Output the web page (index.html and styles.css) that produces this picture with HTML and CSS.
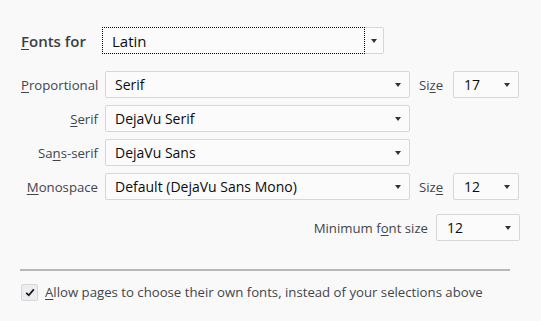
FILE: index.html
```html
<!DOCTYPE html>
<html>
<head>
<meta charset="utf-8">
<link rel="stylesheet" href="styles.css">
</head>
<body>
<div class="page">
  <div class="header">
    <span class="title"><u>F</u>onts for</span>
    <div class="select lang">
      <span class="focus">Latin</span>
      <span class="btn"><i class="arrow"></i></span>
    </div>
  </div>

  <div class="rows">
    <div class="row">
      <span class="label"><u>P</u>roportional</span>
      <div class="select font"><span class="val">Serif</span><i class="arrow"></i></div>
      <span class="size-label">Si<u>z</u>e</span>
      <div class="select size"><span class="val">17</span><i class="arrow"></i></div>
    </div>
    <div class="row">
      <span class="label"><u>S</u>erif</span>
      <div class="select font"><span class="val">DejaVu Serif</span><i class="arrow"></i></div>
    </div>
    <div class="row">
      <span class="label">Sa<u>n</u>s-serif</span>
      <div class="select font"><span class="val">DejaVu Sans</span><i class="arrow"></i></div>
    </div>
    <div class="row">
      <span class="label"><u>M</u>onospace</span>
      <div class="select font"><span class="val">Default (DejaVu Sans Mono)</span><i class="arrow"></i></div>
      <span class="size-label">Siz<u>e</u></span>
      <div class="select size"><span class="val">12</span><i class="arrow"></i></div>
    </div>
  </div>

  <div class="min-row">
    <span class="min-label">Minimum f<u>o</u>nt size</span>
    <div class="select min"><span class="val">12</span><i class="arrow"></i></div>
  </div>

  <hr class="sep">

  <div class="check-row">
    <span class="checkbox"><svg width="10" height="9" viewBox="0 0 10 9"><path d="M1.2 4.8 L3.8 7.3 L8.8 1.3" fill="none" stroke="#1a1a1a" stroke-width="1.8"/></svg></span>
    <span class="check-label"><u>A</u>llow pages to choose their own fonts, instead of your selections above</span>
  </div>
</div>
</body>
</html>
```

FILE: styles.css
```css
html, body {
  margin: 0;
  padding: 0;
  background: #f9f9fa;
}
body {
  font-family: "Open Sans", "Noto Sans", sans-serif;
  font-size: 13.2px;
  color: #42454c;
}
u {
  text-decoration: underline;
  text-underline-offset: 2px;
}
.page {
  padding: 27px 0 0 21px;
  width: 499px;
}
.header {
  display: flex;
  align-items: center;
  height: 27px;
}
.title {
  font-size: 15px;
  font-weight: 600;
  width: 81px;
  color: #3d3f45;
}
.select {
  box-sizing: border-box;
  height: 27px;
  border: 1px solid #d7d7db;
  border-radius: 2px;
  background: #fbfbfb;
  display: flex;
  align-items: center;
  position: relative;
  color: #0c0c0d;
  font-size: 14px;
}
.lang {
  width: 282px;
  border: none;
}
.lang .focus {
  box-sizing: border-box;
  width: 263px;
  height: 27px;
  border: 1px dotted #000;
  padding-left: 9px;
  display: flex;
  align-items: center;
  font-size: 15px;
}
.lang .btn {
  box-sizing: border-box;
  width: 19px;
  height: 27px;
  border: 1px solid #d7d7db;
  border-left: none;
  border-radius: 0 2px 2px 0;
  display: flex;
  align-items: center;
  justify-content: center;
}
.arrow {
  display: block;
  width: 0;
  height: 0;
  border-left: 3.5px solid transparent;
  border-right: 3.5px solid transparent;
  border-top: 4px solid #333;
}
.select .val {
  flex: 1;
  padding-left: 9px;
}
.select > .arrow {
  margin-right: 8px;
}
.rows {
  margin-top: 17px;
  display: flex;
  flex-direction: column;
  gap: 7px;
}
.row {
  display: flex;
  align-items: center;
}
.label {
  width: 77px;
  text-align: right;
  margin-right: 7px;
  white-space: nowrap;
}
.font {
  width: 305px;
}
.size-label {
  margin-left: 9px;
  width: 26px;
  margin-right: 8px;
}
.size {
  width: 66px;
}
.size .val {
  padding-left: 10px;
}
.min-row {
  margin-top: 14px;
  display: flex;
  align-items: center;
  justify-content: flex-end;
}
.min-label {
  margin-right: 8px;
}
.min {
  width: 84px;
}
.min .val {
  padding-left: 10px;
}
.sep {
  margin: 28px 0 0 -1px;
  width: 490px;
  height: 0;
  border: none;
  border-top: 2px solid #b8b8b4;
}
.check-row {
  margin-top: 12px;
  display: flex;
  align-items: center;
}
.checkbox {
  box-sizing: border-box;
  width: 17px;
  height: 17px;
  border: 1px solid #d7d7db;
  border-radius: 2px;
  background: #ededf0;
  display: flex;
  align-items: center;
  justify-content: center;
  margin-right: 7px;
}
.check-label {
  color: #42454c;
}
```
